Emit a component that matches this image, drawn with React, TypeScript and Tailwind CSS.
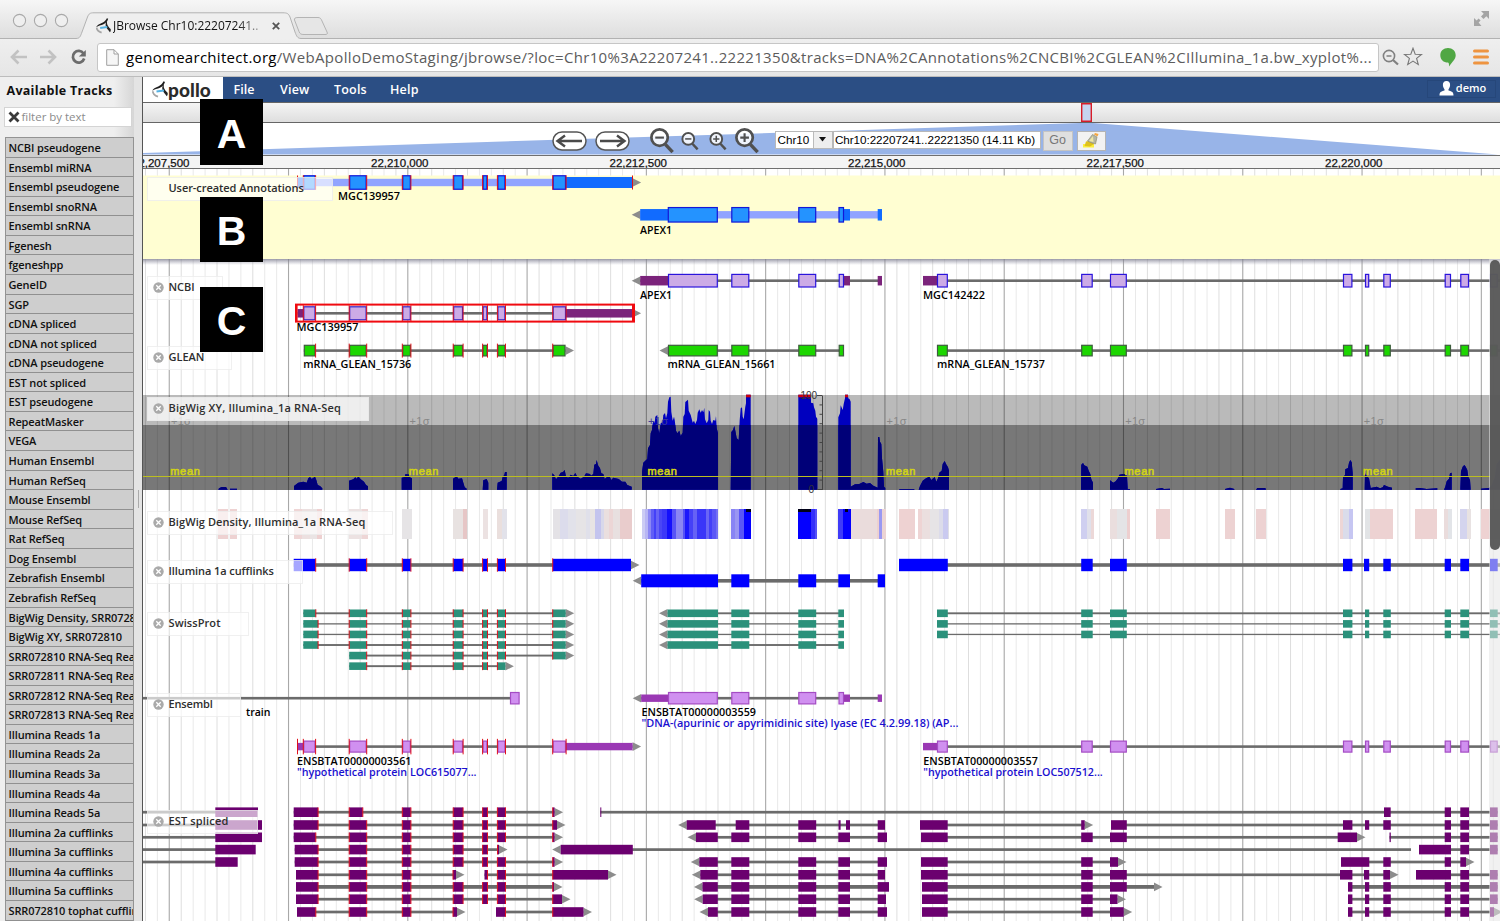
import React from "react";

type Span = [number, number];
type Pt = [number, number];

const TRACKS = [
  "NCBI pseudogene", "Ensembl miRNA", "Ensembl pseudogene", "Ensembl snoRNA", "Ensembl snRNA",
  "Fgenesh", "fgeneshpp", "GeneID", "SGP", "cDNA spliced", "cDNA not spliced", "cDNA pseudogene",
  "EST not spliced", "EST pseudogene", "RepeatMasker", "VEGA", "Human Ensembl", "Human RefSeq",
  "Mouse Ensembl", "Mouse RefSeq", "Rat RefSeq", "Dog Ensembl", "Zebrafish Ensembl", "Zebrafish RefSeq",
  "BigWig Density, SRR072810", "BigWig XY, SRR072810", "SRR072810 RNA-Seq Reads", "SRR072811 RNA-Seq Reads",
  "SRR072812 RNA-Seq Reads", "SRR072813 RNA-Seq Reads", "Illumina Reads 1a", "Illumina Reads 2a",
  "Illumina Reads 3a", "Illumina Reads 4a", "Illumina Reads 5a", "Illumina 2a cufflinks",
  "Illumina 3a cufflinks", "Illumina 4a cufflinks", "Illumina 5a cufflinks", "SRR072810 tophat cufflinks",
];

const SANS = "font-['Open_Sans','Noto_Sans',sans-serif]";
const HELV = "font-['Liberation_Sans',Arial,sans-serif]";

/* ---------- gene models ---------- */

const P2: Span = [349.2, 366.6];
const P3: Span = [402.3, 410.8];
const P4: Span = [453.2, 463];
const P5: Span = [482.6, 487.4];
const P6: Span = [497.4, 505.4];
const MID: Span[] = [P2, P3, P4, P5, P6];
const A2: Span = [731.3, 749.3];
const A3: Span = [798.3, 816.2];
const A4: Span = [838.3, 850];
const R2: Span = [1081.2, 1092.7];
const R3: Span = [1110, 1126.8];
const R4: Span = [1343, 1352.4];
const R5: Span = [1365, 1369.2];
const R6: Span = [1383.3, 1390.8];
const R7: Span = [1444.7, 1451];
const R8: Span = [1460.3, 1469];
const R9: Span = [1490, 1497.7];
const RIGHT: Span[] = [R2, R3, R4, R5, R6, R7, R8, R9];

interface GeneProps {
  cy: number;
  h: number;
  fill: string;
  stroke?: string;
  cds: Span[];
  utr?: Span[];
  utrFill?: string;
  utrH?: number;
  line?: Span;
  lineH?: number;
  lineFill?: string;
  arrow?: "l" | "r";
  splice?: boolean;
  spliceH?: number;
}

function Gene(p: GeneProps) {
  const all = [...p.cds, ...(p.utr ?? [])];
  const x1 = Math.min(...all.map((s) => s[0]));
  const x2 = Math.max(...all.map((s) => s[1]));
  const l: Span = p.line ?? [x1, x2];
  const lh = p.lineH ?? 2.6;
  const sh = p.spliceH ?? p.h;
  const end = Math.max(x2, l[1]);
  return (
    <g>
      <rect x={l[0]} y={p.cy - lh / 2} width={l[1] - l[0]} height={lh} fill={p.lineFill ?? "#6b6b6b"} />
      {p.arrow === "r" && <path d={`M${end} ${p.cy - 4.3}L${end + 8.5} ${p.cy}L${end} ${p.cy + 4.3}Z`} fill="#8c8c8c" />}
      {p.arrow === "l" && <path d={`M${x1} ${p.cy - 4.3}L${x1 - 8.5} ${p.cy}L${x1} ${p.cy + 4.3}Z`} fill="#8c8c8c" />}
      {(p.utr ?? []).map((s, i) => (
        <rect key={i} x={s[0]} y={p.cy - (p.utrH ?? 9) / 2} width={s[1] - s[0]} height={p.utrH ?? 9} fill={p.utrFill} />
      ))}
      {p.cds.map((s, i) =>
        p.stroke ? (
          <rect key={i} x={s[0] + 0.5} y={p.cy - p.h / 2 + 0.5} width={s[1] - s[0] - 1} height={p.h - 1} fill={p.fill} stroke={p.stroke} strokeWidth="1.2" />
        ) : (
          <rect key={i} x={s[0]} y={p.cy - p.h / 2} width={s[1] - s[0]} height={p.h} fill={p.fill} />
        ),
      )}
      {p.splice &&
        p.cds.map((s, i) => (
          <g key={i} fill="#e0101c">
            {s[0] > x1 + 0.1 && <rect x={s[0] - 0.5} y={p.cy - sh / 2} width="1" height={sh} />}
            {s[1] < x2 - 0.1 && <rect x={s[1] - 0.4} y={p.cy - sh / 2} width="1" height={sh} />}
          </g>
        ))}
    </g>
  );
}

function Name({ x, y, w, children, blue }: { x: number; y: number; w: number; children: string; blue?: boolean }) {
  return (
    <text x={x} y={y} textLength={w} lengthAdjust="spacingAndGlyphs" className={`${SANS} text-[11px] font-semibold`} fill={blue ? "#1a0fd0" : "#000"}>
      {children}
    </text>
  );
}

/* ---------- EST alignments ---------- */

interface Est { row: number; b: Span[]; a?: "l" | "r"; line?: Span; s?: boolean; thick?: boolean }
const EST_Y = [812.2, 825, 837.3, 849.6, 862, 874.8, 886.9, 899.2, 912];
const TAIL: Span[] = [R7, R8, R9];
const ESTS: Est[] = [
  { row: 0, b: [[215.3, 258]], line: [143, 216] },
  { row: 1, b: [[215.3, 262]], line: [143, 216] },
  { row: 2, b: [[215.3, 262]], line: [143, 216] },
  { row: 3, b: [[215.3, 255.7]], line: [143, 216] },
  { row: 4, b: [[215.3, 237.7]], line: [143, 216] },
  { row: 0, b: [[293.7, 318], [349.2, 362.7], P3, P4, P5, P6, [552.7, 554.6]], a: "r", s: true },
  { row: 1, b: [[293.7, 318], ...MID, [552.7, 557]], a: "r", s: true },
  { row: 2, b: [[293.7, 315.7], ...MID, [552.7, 554.6]], a: "r", s: true },
  { row: 3, b: [[294.7, 318], P2, P3, P4, P5, [497.5, 499]], a: "r", s: true },
  { row: 4, b: [[294.7, 318], ...MID, [552.7, 554.6]], a: "r", s: true },
  { row: 5, b: [[296, 318], P2, P3, [453, 456]], a: "r", s: true },
  { row: 5, b: [[484.5, 487.4], P6, [552.7, 608]], a: "r", s: true },
  { row: 6, b: [[296, 318], ...MID, [552.7, 554]], a: "r", s: true, thick: true },
  { row: 7, b: [[296, 318], ...MID, [552.7, 562]], a: "r", s: true },
  { row: 8, b: [[297, 315.7], P2, P3, [453, 457]], a: "r", s: true },
  { row: 8, b: [[496, 505.4], [552.7, 583.5]], a: "r", s: true },
  { row: 0, b: [[600.3, 601.3], [1384, 1390.7], ...TAIL] },
  { row: 1, b: [[686.7, 715.7], [735.7, 749.3], A3, [838.5, 840.6], [846, 850], [877.7, 885]], a: "l" },
  { row: 2, b: [[696, 717.8], A2, A3, A4, [877.7, 887]], a: "l" },
  { row: 3, b: [[560.7, 632.8]], line: [632, 1411], a: "l" },
  { row: 4, b: [[699.3, 717.8], A2, A3, A4, [877.7, 887]], a: "l" },
  { row: 5, b: [[700.3, 717.8], A2, A3, A4, [877.7, 885]], a: "l" },
  { row: 6, b: [[702.5, 717.8], A2, A3, A4, [877.7, 889]], a: "l", thick: true },
  { row: 7, b: [[702.7, 717.8], A2, A3, A4, [877.7, 886]], a: "l" },
  { row: 8, b: [[708, 717.8], A2, A3, A4, [877.7, 887]], a: "l" },
  { row: 1, b: [[920, 947.7], [1081.2, 1084.7]], a: "r" },
  { row: 2, b: [[921, 947.7], R2, R3, [1337.7, 1357]], a: "r" },
  { row: 4, b: [[921, 947.7], R2, [1110, 1118]], a: "r" },
  { row: 5, b: [[921, 947.7], R2, R3, [1340, 1352.4], [1364, 1369.2], [1383.3, 1390]], a: "r" },
  { row: 6, b: [[922, 947.7], R2, R3], line: [922, 1154], a: "r", thick: true },
  { row: 7, b: [[922, 947.7], R2, [1110, 1117.5]], a: "r" },
  { row: 8, b: [[922, 947.7], R2, [1110, 1123.7]], a: "r" },
  { row: 1, b: [[1111, 1126.8], R4, R5, R6, ...TAIL] },
  { row: 2, b: [[1389.5, 1390.8], ...TAIL] },
  { row: 3, b: [[1419, 1451], R8, R9] },
  { row: 4, b: [[1341, 1369.3], R6, R7, [1460.3, 1466]], a: "r" },
  { row: 5, b: [[1416, 1451], R8, R9] },
  { row: 6, b: [[1348, 1352.4], R5, R6, ...TAIL], thick: true },
  { row: 7, b: [[1348, 1352.4], R5, R6, ...TAIL] },
  { row: 8, b: [[1348, 1352.4], R5, R6, R7, R8, [1490, 1494]], a: "r" },
];

/* ---------- coverage histogram; samples are in thirds of a pixel ---------- */

const COVERAGE: { ox: number; oy: number; pts: Pt[] }[] = [
  { ox: 140, oy: 380, pts: [[235, 329], [237, 325], [245, 321], [258, 321], [263, 329]] },
  { ox: 140, oy: 380, pts: [[270, 329], [270, 326], [291, 326], [291, 329]] },
  { ox: 140, oy: 380, pts: [[462, 329], [462, 318], [475, 308], [490, 305], [500, 308], [505, 295], [510, 291], [515, 297], [525, 290], [529, 300], [533, 315], [540, 318], [547, 325], [547, 329]] },
  { ox: 140, oy: 380, pts: [[627, 329], [627, 302], [640, 298], [646, 292], [650, 296], [655, 289], [662, 298], [672, 305], [678, 315], [684, 319], [684, 329]] },
  { ox: 140, oy: 380, pts: [[785, 329], [785, 293], [794, 291], [796, 283], [806, 283], [808, 291], [816, 295], [816, 329]] },
  { ox: 140, oy: 380, pts: [[939, 329], [939, 296], [950, 289], [955, 296], [966, 295], [970, 308], [974, 322], [980, 326], [980, 329]] },
  { ox: 140, oy: 380, pts: [[1028, 329], [1030, 301], [1040, 297], [1045, 308], [1045, 329]] },
  { ox: 140, oy: 380, pts: [[1071, 329], [1073, 308], [1085, 303], [1088, 290], [1093, 285], [1095, 276], [1100, 276], [1100, 329]] },
  { ox: 140, oy: 380, pts: [[1237, 329], [1237, 280], [1243, 286], [1248, 298], [1256, 288], [1262, 278], [1269, 276], [1274, 270], [1278, 290], [1285, 293], [1292, 284], [1300, 288], [1306, 279], [1312, 290], [1322, 296], [1332, 290], [1338, 280], [1350, 282], [1353, 287], [1360, 282], [1363, 254], [1368, 252], [1370, 240], [1374, 256], [1380, 265], [1384, 280], [1390, 282], [1394, 297], [1402, 290], [1408, 288], [1414, 300], [1420, 293], [1436, 297], [1446, 305], [1456, 305], [1462, 315], [1475, 320], [1475, 329]] },
  { ox: 630, oy: 260, pts: [[36, 689], [36, 635], [40, 608], [46, 602], [52, 597], [54, 565], [60, 555], [62, 520], [66, 510], [68, 490], [72, 482], [74, 490], [76, 470], [82, 465], [84, 505], [88, 520], [92, 490], [98, 486], [100, 465], [105, 459], [108, 475], [112, 460], [114, 425], [118, 412], [122, 410], [124, 455], [128, 482], [132, 470], [134, 480], [138, 512], [142, 520], [148, 512], [152, 528], [158, 518], [160, 470], [164, 462], [166, 426], [174, 419], [176, 452], [182, 465], [188, 488], [192, 482], [196, 492], [201, 480], [203, 458], [208, 448], [212, 458], [216, 450], [220, 457], [223, 443], [225, 478], [230, 490], [235, 480], [236, 450], [240, 455], [242, 482], [246, 492], [250, 480], [256, 482], [258, 468], [260, 505], [264, 520], [264, 689]] },
  { ox: 630, oy: 260, pts: [[302, 689], [304, 516], [309, 510], [313, 498], [316, 512], [320, 535], [326, 540], [329, 480], [332, 445], [336, 442], [338, 470], [341, 478], [346, 440], [348, 430], [348, 404], [362, 404], [362, 689]] },
  { ox: 630, oy: 260, pts: [[505, 689], [505, 404], [543, 404], [543, 428], [550, 430], [552, 442], [556, 452], [558, 470], [562, 476], [562, 689]] },
  { ox: 630, oy: 260, pts: [[625, 689], [625, 472], [630, 460], [632, 436], [638, 450], [641, 432], [645, 415], [645, 404], [654, 404], [655, 415], [659, 418], [662, 425], [662, 680], [675, 673], [688, 672], [700, 666], [710, 671], [720, 669], [730, 677], [743, 683], [744, 531], [748, 531], [750, 545], [754, 552], [756, 595], [760, 635], [762, 680], [766, 684], [766, 689]] },
  { ox: 630, oy: 260, pts: [[808, 689], [808, 687], [853, 687], [853, 689]] },
  { ox: 630, oy: 260, pts: [[866, 689], [870, 678], [878, 662], [888, 655], [898, 650], [904, 660], [914, 651], [919, 665], [924, 655], [928, 638], [935, 632], [938, 612], [944, 603], [948, 612], [954, 622], [957, 632], [957, 689]] },
  { ox: 1050, oy: 260, pts: [[93, 689], [94, 614], [99, 609], [103, 616], [112, 620], [116, 632], [121, 642], [124, 658], [129, 668], [129, 689]] },
  { ox: 1050, oy: 260, pts: [[180, 689], [180, 661], [190, 668], [197, 664], [204, 655], [208, 644], [218, 642], [226, 642], [231, 648], [233, 687], [240, 687], [240, 689]] },
  { ox: 1050, oy: 260, pts: [[318, 689], [318, 687], [336, 684], [342, 687], [360, 686], [360, 689]] },
  { ox: 1050, oy: 260, pts: [[525, 689], [525, 687], [540, 683], [553, 687], [553, 689]] },
  { ox: 1050, oy: 260, pts: [[618, 689], [622, 684], [646, 684], [648, 689]] },
  { ox: 1050, oy: 260, pts: [[871, 689], [871, 687], [878, 685], [879, 652], [885, 645], [886, 628], [894, 624], [897, 608], [901, 600], [905, 607], [908, 640], [908, 689]] },
  { ox: 1050, oy: 260, pts: [[944, 689], [945, 640], [950, 648], [957, 655], [962, 684], [980, 680], [990, 685], [998, 682], [1002, 675], [1014, 680], [1026, 683], [1026, 689]] },
  { ox: 1050, oy: 260, pts: [[1097, 689], [1097, 685], [1110, 684], [1130, 687], [1162, 685], [1162, 689]] },
  { ox: 1050, oy: 260, pts: [[1182, 689], [1186, 680], [1190, 664], [1197, 656], [1200, 640], [1205, 638], [1205, 689]] },
  { ox: 1050, oy: 260, pts: [[1231, 689], [1233, 634], [1238, 620], [1243, 615], [1247, 620], [1252, 630], [1255, 650], [1260, 660], [1262, 689]] },
  { ox: 1050, oy: 260, pts: [[1293, 689], [1293, 686], [1318, 684], [1325, 675], [1335, 650], [1340, 612], [1350, 600], [1350, 689]] },
];
const HIST = COVERAGE.map((c) => "M" + c.pts.map(([x, y]) => `${(c.ox + x / 3).toFixed(1)} ${(c.oy + y / 3).toFixed(1)}`).join("L") + "Z").join("");

/* ---------- density heat strips: x1, x2, colour ---------- */

const DENSITY: [number, number, string][] = [
  [218.3, 228, "#eed2d2"], [230, 237.2, "#eed2d2"],
  [293.8, 302, "#efd6d6"], [302, 310, "#ece0e0"], [310, 317, "#eae4e4"], [317, 321.7, "#eed0d0"],
  [349, 362, "#ece2e2"], [362, 368, "#eed6d6"], [401.7, 412, "#e6e4e6"],
  [453, 462.5, "#e8e2e1"], [462.5, 467, "#e6c6c6"], [482.7, 488.3, "#ece2e2"],
  [497.2, 501.5, "#eadfdd"], [501.5, 506.7, "#e2e2ea"],
  [552.5, 560, "#e4e2e6"], [560, 568, "#dcdcec"], [568, 576, "#e2e2ea"], [576, 586, "#e6e4e6"], [586, 590, "#e0e0ea"],
  [590, 594.5, "#e8e4e4"], [594.5, 601, "#c4c4ee"], [601, 604, "#d8d8ea"], [604, 609, "#eadfdf"], [609, 613, "#ecd6d6"],
  [613, 620, "#e8e0e0"], [620, 632, "#e9cccc"],
  [642, 645, "#ccccf4"], [645, 648, "#b8b6f4"], [648, 651, "#8c88f4"], [651, 654, "#615ef6"], [654, 656, "#4441f8"],
  [656, 659, "#6864f6"], [659, 662, "#4a46f6"], [662, 667, "#3c38f8"], [667, 672, "#1410fc"], [672, 676, "#5854f6"],
  [676, 683, "#8a86f3"], [683, 685, "#5652f6"], [685, 689, "#1c18fc"], [689, 693, "#4541f7"], [693, 697, "#6662f5"],
  [697, 706, "#3a36f8"], [706, 709, "#6a66f5"], [709, 712, "#4440f8"], [712, 716, "#5c58f6"], [716, 718, "#7470f4"],
  [731.2, 735, "#8884f4"], [735, 739, "#9a96f2"], [739, 744, "#5a56f6"], [744, 750.5, "#0400ff"],
  [798.2, 811, "#0400ff"], [811, 815, "#3430fa"], [815, 817.4, "#5652f6"],
  [838.3, 843, "#3f3bf8"], [843, 850.6, "#0400ff"], [850.6, 877, "#eadcdc"], [877, 879, "#ecd0d0"], [879, 881.5, "#9a98f2"], [881.5, 885.6, "#ecd4d4"],
  [899.2, 914.7, "#eed2d2"], [918, 922, "#eed4d4"], [922, 930, "#ebdfdf"], [930, 939, "#e6e4e6"], [939, 943, "#dcdcea"], [943, 947.5, "#cacaf0"], [947.5, 949, "#dedee6"],
  [1081, 1087, "#cfcff0"], [1087, 1091, "#e0e0ea"], [1091, 1094, "#ecd8d8"],
  [1110, 1117, "#eadede"], [1117, 1127, "#e4e4e6"], [1127, 1130, "#edcfcf"],
  [1156, 1170.3, "#edd2d2"], [1224.6, 1235, "#edd2d2"], [1256, 1266, "#edd2d2"],
  [1340, 1343, "#edd6d6"], [1343, 1349, "#dadcea"], [1349, 1353, "#c6c6f2"],
  [1365, 1370, "#e2e4e6"], [1370, 1392.5, "#edd2d2"], [1415.3, 1437.3, "#edd2d2"],
  [1444, 1448, "#eadcdc"], [1448, 1451.7, "#e2e4e8"], [1460, 1467, "#d4d4ee"], [1467, 1471, "#e8e2e2"], [1481, 1500, "#eed2d2"],
];

const MAJORS = Array.from({ length: 12 }, (_, i) => 169.3 + i * 119.28);
const MINORS = Array.from({ length: 114 }, (_, i) => 169.3 - 24 + i * 11.928 + 0.144);

function Grid({ y, h }: { y: number; h: number }) {
  return (
    <g>
      {MINORS.map((x, i) => (i % 10 === 2 ? null : <rect key={i} x={x - 0.5} y={y} width="1" height={h} fill={i % 3 ? "#e9e9e9" : "#dedede"} />))}
      {MAJORS.map((x, i) => <rect key={i} x={x - 0.6} y={y} width="1.1" height={h} fill="#a8a8a8" />)}
    </g>
  );
}

const RED_SWISS: Span[][] = [
  [[303.3, 315.7], ...MID, [552.7, 565.7]],
  [[303.3, 318], ...MID, [552.7, 565.7]],
  [[303.3, 318], ...MID, [552.7, 565.7]],
  [[303.3, 318], ...MID, [552.7, 565.7]],
  [...MID, [552.7, 565.7]],
  MID,
];

function Plot() {
  return (
    <svg className="block h-[752px] w-[1357px]" viewBox="143 169 1357 752">
      <defs>
        <clipPath id="lowBand"><rect x="143" y="425" width="1357" height="65" /></clipPath>
        <linearGradient id="dropShade" x1="0" y1="0" x2="0" y2="1">
          <stop offset="0" stopColor="#77778a" stopOpacity=".75" />
          <stop offset="1" stopColor="#9999aa" stopOpacity="0" />
        </linearGradient>
      </defs>
      <rect x="143" y="169" width="1357" height="752" fill="#fff" />
      <Grid y={169} h={7} />
      <Grid y={259} h={662} />
      <rect x="143" y="175.5" width="1357" height="83.5" fill="#fffed2" />
      <rect x="143" y="259" width="1357" height="6" fill="url(#dropShade)" />

      {/* user-created annotations */}
      <Gene cy={182.5} h={14.5} fill="#2493ff" stroke="#1216d8" cds={[[303.3, 315.5], ...MID, [552.7, 566]]} utr={[[297.5, 303.5], [566, 632.6]]} utrFill="#116bff" utrH={11} lineH={7.4} lineFill="#91a4ff" arrow="r" splice spliceH={14.5} />
      <rect x="632" y="175.5" width="1" height="14" fill="#e0101c" />
      <rect x="297" y="175.5" width="1" height="14" fill="#e0101c" />
      <Name x={338} y={200} w={62}>MGC139957</Name>
      <Gene cy={214.8} h={15.5} fill="#2493ff" stroke="#1216d8" cds={[[667.8, 717.8], A2, A3, [838.5, 844]]} utr={[[640.2, 668], [844, 850], [877.7, 882]]} utrFill="#116bff" utrH={11.5} lineH={7.4} lineFill="#91a4ff" arrow="l" />
      <Name x={640} y={233.5} w={32}>APEX1</Name>

      {/* NCBI */}
      <Gene cy={280.7} h={13.6} fill="#ccabe6" stroke="#2a14dc" cds={[[668, 717.8], A2, A3, [838.7, 844]]} utr={[[640.2, 668], [844, 850], [877.7, 882]]} utrFill="#7b237b" utrH={9.5} arrow="l" />
      <Name x={640} y={299} w={32}>APEX1</Name>
      <Gene cy={280.7} h={13.6} fill="#ccabe6" stroke="#2a14dc" cds={[[937, 947.8], ...RIGHT]} utr={[[923, 937]]} utrFill="#7b237b" utrH={9.5} line={[923, 1500]} />
      <Name x={923} y={299} w={62}>MGC142422</Name>
      <Gene cy={313.3} h={14} fill="#ccabe6" stroke="#3222c4" cds={[[303.3, 315.5], ...MID, [552.7, 566]]} utr={[[297.5, 303.5], [566, 632.6]]} utrFill="#7b237b" utrH={8.5} arrow="r" splice spliceH={16} />
      <rect x="296" y="304.6" width="338" height="17" fill="none" stroke="#f00a10" strokeWidth="2" />
      <rect x="295" y="304" width="2.6" height="18" fill="#f00a10" />
      <rect x="632" y="304" width="2.6" height="18" fill="#f00a10" />
      <Name x={296.5} y={330.8} w={62}>MGC139957</Name>

      {/* GLEAN */}
      <Gene cy={350.6} h={11.6} fill="#1cd600" stroke="#3d5c3d" cds={[[303.8, 315.5], ...MID, [552.7, 565.5]]} arrow="r" splice spliceH={14} />
      <Name x={303.3} y={368.3} w={108}>mRNA_GLEAN_15736</Name>
      <Gene cy={350.6} h={11.6} fill="#1cd600" stroke="#3d5c3d" cds={[[668, 717.8], A2, A3, [838.7, 844]]} arrow="l" />
      <Name x={667.5} y={368.3} w={108}>mRNA_GLEAN_15661</Name>
      <Gene cy={350.6} h={11.6} fill="#1cd600" stroke="#3d5c3d" cds={[[937, 947.8], ...RIGHT]} line={[937, 1500]} />
      <Name x={937} y={368.3} w={108}>mRNA_GLEAN_15737</Name>

      {/* BigWig XY */}
      <rect x="143" y="395" width="1357" height="30" fill="#000" fillOpacity=".27" />
      <rect x="143" y="425" width="1357" height="65" fill="#000" fillOpacity=".53" />
      <path d={HIST} fill="#0000bf" />
      <path d={HIST} fill="#000078" clipPath="url(#lowBand)" />
      <rect x="746" y="394.7" width="4.7" height="2.6" fill="#c80010" />
      <rect x="798.3" y="394.7" width="12.7" height="2.6" fill="#c80010" />
      <rect x="845" y="394.7" width="3" height="2.6" fill="#c80010" />
      <rect x="143" y="476" width="1347" height="1" fill="#bcbe20" />
      {[0, 2, 4, 6, 8, 10].map((i) => (
        <g key={i} className={HELV}>
          <text x={MAJORS[i] + 1} y="475.4" textLength="29.5" className="text-[11px]" fill="#d0d218" stroke="#d0d218" strokeWidth=".6">mean</text>
          <text x={MAJORS[i] + 1.6} y="425.4" textLength="20" className="text-[11px]" fill={i === 4 ? "#3c3c98" : "#878787"}>+1σ</text>
        </g>
      ))}
      <g fill="#333">
        <rect x="822" y="395.5" width="1" height="94.5" fill="#444" />
        {Array.from({ length: 11 }, (_, i) => (
          <rect key={i} x={i % 10 ? 819.5 : 817} y={395 + i * 9.4} width={i % 10 ? 3 : 5} height="1" fill="#444" />
        ))}
        <text x="800.5" y="399.4" textLength="16.5" className={`${HELV} text-[10px]`}>100</text>
        <text x="808.5" y="493" className={`${HELV} text-[10px]`}>0</text>
      </g>

      {/* BigWig density */}
      <g shapeRendering="crispEdges">
        {DENSITY.map(([a, b, c], i) => <rect key={i} x={a} y="509" width={b - a} height="29.5" fill={c} />)}
        <rect x="746" y="509" width="4.7" height="3" fill="#000018" />
        <rect x="798.3" y="509" width="12.7" height="3" fill="#000018" />
        <rect x="845" y="509" width="3" height="3" fill="#000018" />
      </g>

      {/* Illumina cufflinks */}
      <Gene cy={565} h={12.4} fill="#0000ff" lineH={3.6} cds={[[293.7, 315.6], ...MID, [552.7, 631]]} arrow="r" splice spliceH={13.4} />
      <Gene cy={580.8} h={13} fill="#0000ff" lineH={3.6} cds={[[641.2, 718], A2, A3, A4, [877.7, 885]]} arrow="l" />
      <Gene cy={565} h={12.4} fill="#0000ff" lineH={3.6} cds={[[899, 947.8], R2, R3, R4, [1364, 1369.2], R6, R7, R8, R9]} line={[899, 1500]} />

      {/* SwissProt */}
      {RED_SWISS.map((s, i) => (
        <Gene key={i} cy={613.3 + i * 10.57} h={7.6} fill="#2b917b" cds={s} lineH={i === 1 || i === 2 ? 1.3 : 1.9} arrow="r" splice spliceH={8} />
      ))}
      {[0, 1, 2, 3].map((i) => (
        <Gene key={i} cy={613.3 + i * 10.57} h={7.6} fill="#2b917b" cds={[[667.5, 718], A2, A3, [838.3, 844]]} lineH={i === 1 || i === 2 ? 1.3 : 1.9} arrow="l" />
      ))}
      {[0, 1, 2].map((i) => (
        <Gene key={i} cy={613.3 + i * 10.57} h={7.6} fill="#2b917b" cds={[[937, 947.8], ...RIGHT]} line={[937, 1500]} lineH={i ? 1.3 : 1.9} />
      ))}

      {/* Ensembl */}
      <Gene cy={698.2} h={12.4} fill="#d090f0" stroke="#a44cc4" cds={[[510, 519.6]]} line={[143, 511]} />
      <Name x={246} y={716} w={24.5}>train</Name>
      <Gene cy={698.2} h={12.4} fill="#d090f0" stroke="#a44cc4" cds={[[668, 717.8], A2, A3, [838.5, 844]]} utr={[[641.2, 668], [844, 850], [877.7, 882]]} utrFill="#9a38b4" utrH={7.4} arrow="l" />
      <Name x={641.5} y={716.3} w={114.5}>ENSBTAT00000003559</Name>
      <Name x={641.5} y={727} w={317} blue>"DNA-(apurinic or apyrimidinic site) lyase (EC 4.2.99.18) (AP...</Name>
      <Gene cy={746.6} h={12} fill="#d090f0" stroke="#a44cc4" cds={[[303.3, 315.5], ...MID, [552.7, 566]]} utr={[[297.5, 303.5], [566, 632.6]]} utrFill="#9a38b4" utrH={7.4} arrow="r" splice spliceH={15.5} />
      <rect x="297" y="738.8" width="1" height="15.5" fill="#e0101c" />
      <Name x={297} y={765.2} w={114.5}>ENSBTAT00000003561</Name>
      <Name x={297} y={775.8} w={179.5} blue>"hypothetical protein LOC615077...</Name>
      <Gene cy={746.6} h={12} fill="#d090f0" stroke="#a44cc4" cds={[[937, 947.8], ...RIGHT]} utr={[[923, 937]]} utrFill="#9a38b4" utrH={7.4} line={[923, 1500]} />
      <Name x={923.3} y={765.2} w={114.5}>ENSBTAT00000003557</Name>
      <Name x={923.3} y={775.8} w={179.5} blue>"hypothetical protein LOC507512...</Name>

      {/* EST spliced */}
      {ESTS.map((e, i) => (
        <Gene key={i} cy={EST_Y[e.row]} h={9.6} fill="#6b006f" cds={e.b} line={e.line} lineH={e.thick ? 3.8 : 2.7} arrow={e.a} splice={e.s} spliceH={9.6} />
      ))}
    </svg>
  );
}

/* ---------- track labels ---------- */

function Label({ box, text, tone, closable = true }: { box: string; text: string; tone?: string; closable?: boolean }) {
  return (
    <div className={`absolute left-[4px] flex h-[24px] items-center border border-[#e6e6e6]/60 pb-px whitespace-nowrap ${tone ?? "bg-white/65"} ${box} ${SANS} text-[11px] font-semibold text-[#2e2e2e]`}>
      <span className="flex w-[20.500px] justify-end pr-[5px]">
        {closable && (
          <svg width="11" height="11" viewBox="0 0 11 11" className="block">
            <circle cx="5.5" cy="5.5" r="5.2" fill="#aaa" />
            <path d="M3.3 3.3l4.4 4.4M7.7 3.3L3.3 7.7" stroke="#fff" strokeWidth="1.3" />
          </svg>
        )}
      </span>
      {text}
    </div>
  );
}

function Callout({ pos, letter }: { pos: string; letter: string }) {
  return (
    <div className={`absolute left-[200px] flex w-[63px] items-center justify-center bg-black pt-[4px] text-[41px] leading-none font-bold text-white ${HELV} ${pos}`}>
      {letter}
    </div>
  );
}

function Magnifier({ size, plus }: { size: "lg" | "sm"; plus?: boolean }) {
  return (
    <svg className={size === "lg" ? "h-[27px] w-[26px]" : "h-[20px] w-[18px]"} viewBox="0 0 26 28">
      <circle cx="10.5" cy="11" r="8.5" fill="#fff" fillOpacity=".85" stroke="#505050" strokeWidth="2.8" />
      <path d="M16.5 18L24 26" stroke="#505050" strokeWidth="3.6" />
      <path d={plus ? "M6 11h9M10.500 6.500v9" : "M6 11h9"} stroke="#505050" strokeWidth="2.2" />
    </svg>
  );
}

function ArrowPill({ right }: { right?: boolean }) {
  return (
    <svg width="35" height="20" viewBox="0 0 35 20" className="block">
      <rect x="1" y="1" width="33" height="18" rx="9" fill="#fff" stroke="#555" strokeWidth="1.5" />
      <path d={right ? "M5 10H29M22 4.500L29.500 10L22 15.500" : "M30 10H6M13 4.500L5.500 10L13 15.500"} fill="none" stroke="#4a4a4a" strokeWidth="2.4" />
    </svg>
  );
}

function HelixMark({ className }: { className: string }) {
  return (
    <svg className={className} viewBox="0 0 16 17" fill="none">
      <path d="M.3 9.800C1.500 6.800 5 6.500 7.800 4.600C9.500 3.300 10.600 2 11.600.200L13 .900C12.200 3.500 10.500 5.400 8 6.700C5.500 8 2.500 8 .3 9.800Z" fill="#1d1d1d" />
      <path d="M12 2.500C11.200 6 12 8.600 15.600 11.800C16 13.300 15.500 14.600 14.800 15.200C13.200 12.500 10.600 11.200 10.300 8C10.100 5.500 10.800 4 12 2.500Z" fill="#222" />
      <path d="M4.500 10.600L12 9.600" stroke="#56b2e2" strokeWidth="2" />
      <path d="M.8 10.200C.9 13 2.500 14.500 6 15.600" stroke="#a5a5a5" strokeWidth="1.800" />
    </svg>
  );
}

/* ---------- browser chrome ---------- */

function Chrome() {
  return (
    <header className="shrink-0">
      <div className="relative flex h-[38px] items-center bg-linear-to-b from-[#f6f6f6] to-[#dedede]">
        <svg className="absolute inset-0 h-[39px] w-full" viewBox="0 0 1500 39">
          <path d="M0 38.500H76C80 38.500 80.500 36 82 32L87.500 17C89 13.500 90 12.800 94 12.800H283C287 12.800 288.500 13.500 290 17L295 32C296.500 36 297.500 38.500 301 38.500H1500" fill="#efefef" stroke="#b2b2b2" />
          <path d="M298 17.500H318C320 17.500 321 18.500 322 21L327 32C328 34 327 34.500 325 34.500H304C301 34.500 300 34 299 31.500L294.500 20C294 18.500 295 17.500 298 17.500Z" fill="#e6e6e6" stroke="#b4b4b4" />
          {[19.5, 40.5, 61.500].map((x) => <circle key={x} cx={x} cy="20.500" r="6.100" fill="#efefef" stroke="#a9a9a9" strokeWidth="1.100" />)}
        </svg>
        <div className={`relative mt-[13px] ml-[95px] flex items-center ${SANS}`}>
          <HelixMark className="h-[16px] w-[17px]" />
          <span className="ml-[1px] w-[153px] overflow-hidden bg-linear-to-r from-[#111] from-80% to-[#ccc] bg-clip-text text-[12px] font-medium tracking-[-0.02px] whitespace-nowrap text-transparent">JBrowse Chr10:22207241..</span>
          <svg width="8" height="8" viewBox="0 0 8 8" className="ml-[6px]"><path d="M.8.8l6.400 6.400M7.200.8L.8 7.200" stroke="#555" strokeWidth="1.800" /></svg>
        </div>
        <svg className="absolute top-[10px] right-[10px]" width="17" height="17" viewBox="0 0 17 17">
          <path d="M8 1h8v8l-2.700-2.700-2.800 2.800-2.500-2.600 2.700-2.800zM1 8l2.600 2.600 2-2 2 2-2 2L8.500 16H1z" fill="#a5a5a5" />
        </svg>
      </div>
      <div className="flex h-[39px] items-center border-b border-[#bdbdbd] bg-linear-to-b from-[#efefef] to-[#e6e6e6]">
        <svg width="97" height="38" viewBox="0 0 97 38" fill="none">
          <path d="M27 19H12.500M18.500 12.500L12 19L18.500 25.500" stroke="#c2c2c2" strokeWidth="2.600" />
          <path d="M40 19H54.500M48.500 12.500L55 19L48.500 25.500" stroke="#c2c2c2" strokeWidth="2.600" />
          <path d="M83.500 15.500A5.800 5.800 0 1 0 84.200 20.500" stroke="#6c6c6c" strokeWidth="2.700" />
          <path d="M85.800 12v6.500h-7z" fill="#6c6c6c" />
        </svg>
        <div className="flex h-[29px] w-[1282px] items-center rounded-[3px] border border-[#c6c6c6] bg-white">
          <svg width="13" height="17" viewBox="0 0 13 17" className="ml-[8px] shrink-0"><path d="M.7.700H8L12.300 5V16.300H.7zM8 .7V5H12.300" fill="#f6f6f6" stroke="#a0a0a0" /></svg>
          <div className={`ml-[7px] w-[1256px] shrink-0 text-[15px] whitespace-nowrap text-[#5c5c5c] ${SANS}`}>
            <span className="tracking-[0.290px] text-black">genomearchitect.org</span>
            <span className="tracking-[0.320px]">/WebApolloDemoStaging/jbrowse/?loc=Chr10%3A22207241..22221350&amp;tracks=DNA%2CAnnotations%2CNCBI%2CGLEAN%2CIllumina_1a.bw_xyplot%...</span>
          </div>
          <svg width="42" height="20" viewBox="0 0 42 20" fill="none" className="shrink-0">
            <circle cx="7" cy="9" r="5.600" stroke="#808080" strokeWidth="1.600" />
            <path d="M4.500 9h5" stroke="#808080" strokeWidth="1.500" />
            <path d="M11 13L16 17.500" stroke="#808080" strokeWidth="2.300" />
            <path d="M31 1.200L33.200 7.200L39.500 7.500L34.600 11.400L36.300 17.600L31 14.100L25.700 17.600L27.400 11.400L22.500 7.500L28.800 7.200Z" stroke="#777" strokeWidth="1.100" />
          </svg>
        </div>
        <svg width="121" height="38" viewBox="0 0 121 38">
          <path d="M69 10c4.500 0 7.700 3 7.700 7.200S73 24 70 28.500c0-2.500 0-3.500-1-3.900c-4.500 0-7.700-3.200-7.700-7.400S64.500 10 69 10z" fill="#50a744" />
          <path d="M95.500 13h13M95.500 19h13M95.500 25h13" stroke="#ee9440" strokeWidth="3" strokeLinecap="round" />
        </svg>
      </div>
    </header>
  );
}

function Sidebar() {
  return (
    <aside className={`flex w-[143px] shrink-0 border-r border-[#555] bg-[#efefef] ${SANS}`}>
      <div className="w-[134px] shrink-0 overflow-hidden bg-linear-to-r from-[#efefef] from-85% to-[#d6d6d6] pl-[4px]">
        <h2 className="mt-[4px] ml-[2.500px] h-[19px] text-[12.500px] leading-[19px] font-bold tracking-[0.270px] whitespace-nowrap text-[#111]">Available Tracks</h2>
        <div className="mt-[7px] flex h-[20px] w-[128px] items-center border border-[#d4d4d4] bg-white pl-[2.500px]">
          <svg width="12" height="12" viewBox="0 0 12 12"><path d="M1.500 1.500l9 9M10.500 1.500l-9 9" stroke="#3a3a3a" strokeWidth="2.800" /></svg>
          <span className="ml-[2px] text-[11.500px] tracking-[-0.02px] text-[#8c8c8c]">filter by text</span>
        </div>
        <ul className="mt-[10px] ml-[0.500px] w-[129px] border border-b-0 border-[#939393]">
          {TRACKS.map((t) => (
            <li key={t} className="h-[19.570px] overflow-hidden border-b border-[#909090] bg-[#cecece] pl-[3px] text-[11px] leading-[19.500px] font-semibold tracking-[-0.120px] whitespace-nowrap text-[#111]">{t}</li>
          ))}
        </ul>
      </div>
      <div className="flex flex-1 items-center bg-[#e4e4e4]">
        <div className="ml-[4px] h-[18px] w-px bg-[#aaa]" />
      </div>
    </aside>
  );
}

function Navigation() {
  const labels: [number, string][] = [[132, "22,207,500"], [371, "22,210,000"], [609.500, "22,212,500"], [848, "22,215,000"], [1086.500, "22,217,500"], [1325, "22,220,000"]];
  return (
    <>
      <nav className={`flex h-[25px] items-center bg-[#2b4e84] text-[12.500px] font-semibold text-white ${SANS}`}>
        <div className="flex h-full w-[80px] items-center bg-white pl-[8px]">
          <HelixMark className="h-[17px] w-[18px] shrink-0" />
          <span className="-mt-[1px] -ml-px font-['Lato',sans-serif] text-[19px] leading-none font-black tracking-[0.100px] text-[#2b2b2b]">pollo</span>
        </div>
        <span className="mt-[2px] ml-[10.500px] w-[46.500px]">File</span>
        <span className="mt-[2px] w-[54px] tracking-[0.200px]">View</span>
        <span className="mt-[2px] w-[56px] tracking-[0.200px]">Tools</span>
        <span className="mt-[2px] tracking-[0.200px]">Help</span>
        <div className="mr-[4px] mb-[2px] ml-auto flex h-[18px] w-[69px] items-center justify-center gap-[2px] border border-[#26477a] pl-[2px] text-[11px]">
          <svg width="15" height="15" viewBox="0 0 15 15"><path d="M7.500 0C10 0 11.300 1.800 11.100 4.300C11 6 10.200 7.300 9.500 8.200V9.600C12 10.500 14.500 10.600 14.500 14.500H.5C.5 10.600 3 10.500 5.500 9.600V8.200C4.800 7.300 4 6 3.900 4.300C3.700 1.800 5 0 7.500 0Z" fill="#fff" /></svg>
          demo
        </div>
      </nav>
      <div className="h-[21px] border-y border-[#666] bg-linear-to-b from-[#f5f5f5] to-[#dedede] pl-[938px]">
        <svg width="11" height="19" viewBox="0 0 11 19" className="block"><path d="M.7.700H10.300V18.300H.7Z" fill="#c6d4f0" stroke="#d81c28" strokeWidth="1.400" /></svg>
      </div>
      <div className="relative h-[32px] bg-white">
        <svg className="absolute inset-0 h-[32px] w-full" viewBox="143 123 1357 32"><path d="M1081 123H1093L1498 154.500H143V153Z" fill="#98b4e8" /></svg>
        <div className={`relative flex h-full items-center pt-[3px] pl-[408.500px] text-[11.300px] text-black ${HELV}`}>
          <div className="flex w-[97px] gap-[8px]"><ArrowPill /><ArrowPill right /></div>
          <div className="flex w-[126px] items-center">
            <div className="w-[32px]"><Magnifier size="lg" /></div>
            <div className="w-[28.500px]"><Magnifier size="sm" /></div>
            <div className="w-[25px]"><Magnifier size="sm" plus /></div>
            <Magnifier size="lg" plus />
          </div>
          <div className="mb-[2px] flex h-[18px] w-[58px] border border-[#b8b8b8] bg-white leading-[16px]">
            <span className="w-[37px] pl-[2px] text-[11.700px]">Chr10</span>
            <span className="flex flex-1 items-center justify-center border-l border-[#bbb] bg-[#eee]">
              <svg width="7" height="5" viewBox="0 0 7 5"><path d="M0 0h7L3.500 4.500z" fill="#111" /></svg>
            </span>
          </div>
          <div className="mb-[2px] flex h-[18px] w-[208px] items-center border border-[#b8b8b8] bg-white pl-[1.500px] text-[11.700px] leading-none tracking-[-0.070px] whitespace-nowrap">Chr10:22207241..22221350 (14.11 Kb)</div>
          <div className="ml-[2px] flex h-[20px] w-[30px] items-center justify-center border border-[#c4c4c4] bg-[#dfdfdf] text-[12.500px] text-[#777]">Go</div>
          <div className="ml-[4px] flex h-[20px] w-[29px] items-center justify-center border border-[#b4b4b4] bg-[#f2f2f2]">
            <svg width="16" height="15" viewBox="0 0 16 15">
              <path d="M0 11H11V14.500H0z" fill="#fbee3c" />
              <path d="M1.500 13L3 8.500L8 7.500L11 11L7 13.500Z" fill="#dfc11c" />
              <path d="M4.500 8L9.500 1.500L14 4L12.500 11L9 10Z" fill="#b4b6a4" stroke="#908f74" strokeWidth=".700" />
              <path d="M6 8L10 3L10.500 9z" fill="#eee7a4" />
              <path d="M12 0L15.500 1L14.500 3.500L11 1.500z" fill="#f4a640" />
            </svg>
          </div>
        </div>
      </div>
      <div className="h-[14px] border-y border-[#6f6f6f] bg-[#f4f4f4]">
        <svg className="block h-[12px] w-[1357px]" viewBox="143 156 1357 12">
          {labels.map(([x, t]) => <text key={t} x={x} y="166.600" textLength="57.500" className={`${HELV} text-[11.500px]`} fill="#111" stroke="#111" strokeWidth=".250">{t}</text>)}
        </svg>
      </div>
    </>
  );
}

export default function App() {
  return (
    <div className="relative flex h-[921px] w-[1500px] flex-col overflow-hidden bg-white">
      <Chrome />
      <div className="flex min-h-0 flex-1">
        <Sidebar />
        <main className="flex min-w-0 flex-1 flex-col">
          <Navigation />
          <section className="relative flex-1">
            <Plot />
            <Label box="top-[8px] w-[186px] tracking-[-0.060px]" text="User-created Annotations" closable={false} />
            <Label box="top-[107px] w-[76px]" text="NCBI" />
            <Label box="top-[177px] w-[85px]" text="GLEAN" />
            <Label box="top-[228px] w-[222px] tracking-[0.170px]" tone="bg-white/75" text="BigWig XY, Illumina_1a RNA-Seq" />
            <Label box="top-[342px] w-[246px] tracking-[0.080px]" text="BigWig Density, Illumina_1a RNA-Seq" />
            <Label box="top-[391px] w-[156px] tracking-[-0.080px]" text="Illumina 1a cufflinks" />
            <Label box="top-[443px] w-[102px] tracking-[0.080px]" text="SwissProt" />
            <Label box="top-[524px] w-[94px] tracking-[-0.150px]" text="Ensembl" />
            <Label box="top-[641px] w-[111px] tracking-[0.150px]" text="EST spliced" />
            <div className="absolute top-[90px] right-0 h-[662px] w-[11px] bg-[#e6e6e6]/55">
              <div className="mt-[1px] ml-[1px] h-[290px] w-[10px] rounded-[5px] bg-[#555]/95" />
            </div>
          </section>
        </main>
      </div>
      <Callout pos="top-[99px] h-[66px]" letter="A" />
      <Callout pos="top-[197px] h-[65px]" letter="B" />
      <Callout pos="top-[287px] h-[65px]" letter="C" />
    </div>
  );
}
